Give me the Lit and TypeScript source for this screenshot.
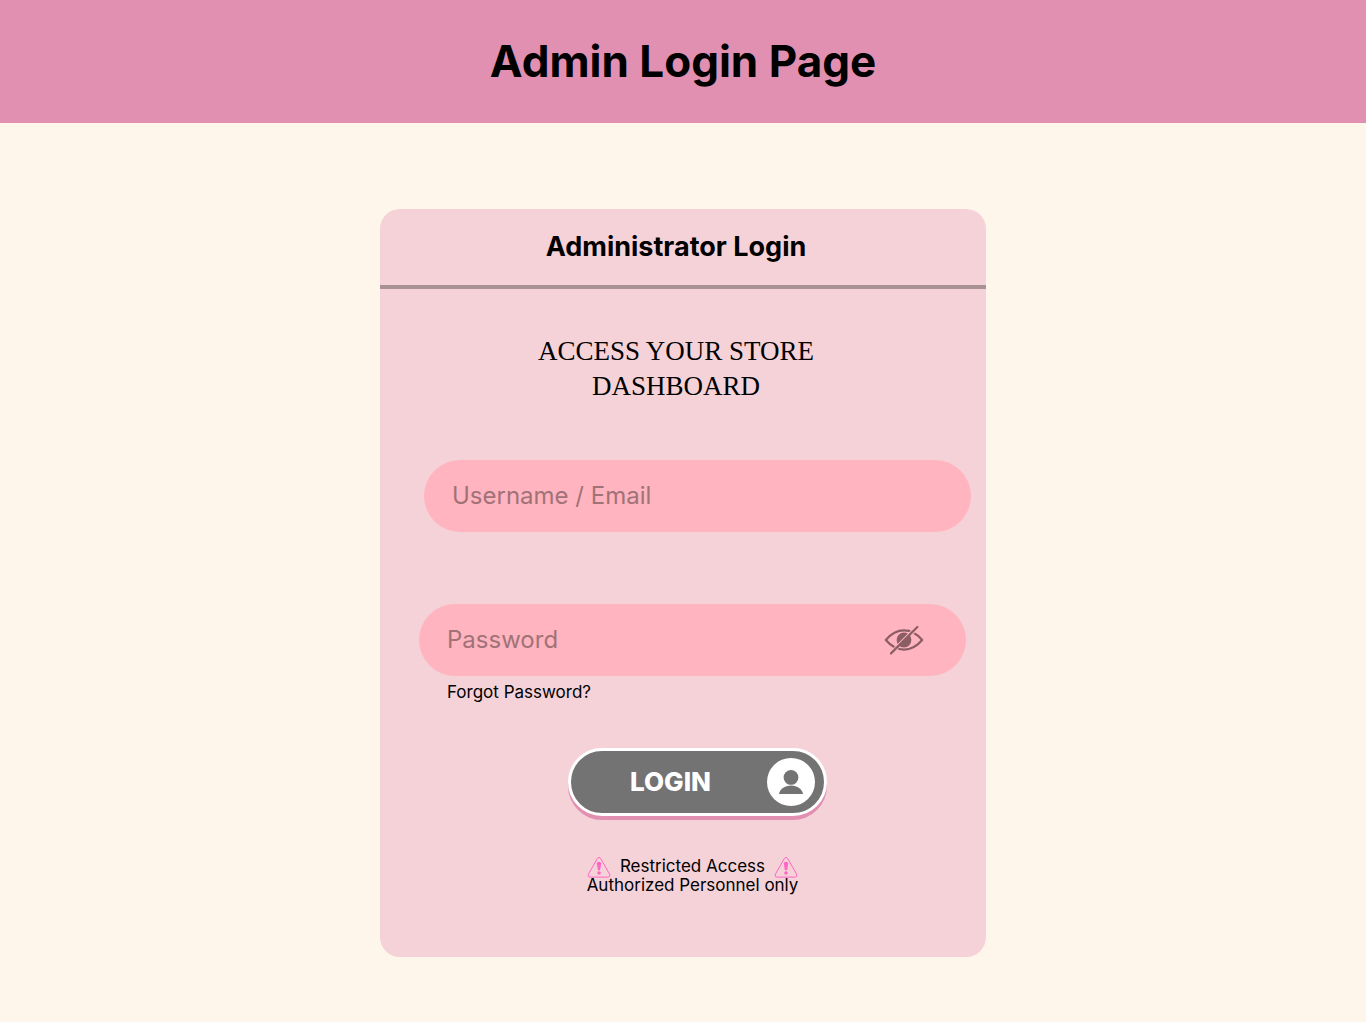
import { LitElement, html, css, svg } from "lit";
import { customElement, state } from "lit/decorators.js";

const warningIcon = html`
  <svg class="warning" viewBox="0 0 24 22" aria-hidden="true">
    <path
      d="M10.4 2.4 Q12 .2 13.6 2.4 L22.6 18.2 Q23.6 20.9 21.2 21.1 H2.8 Q.4 20.9 1.4 18.2 Z"
      fill="none"
      stroke="#ff66c4"
      stroke-width="1"
      stroke-linejoin="round"
    />
    <path d="M9.8 7.6 Q9.8 5.8 12 5.8 Q14.2 5.8 14.2 7.6 L13.1 14.2 H10.9 Z" fill="#ff66c4" />
    <circle cx="12" cy="17" r="1.8" fill="#ff66c4" />
  </svg>
`;

@customElement("app-root")
export class AppRoot extends LitElement {
  @state() private revealed = false;

  static styles = css`
    :host {
      display: flex;
      flex-direction: column;
      min-height: 100vh;
      background: #fff6eb;
      color: #000;
      font-family: Inter, "Liberation Sans", sans-serif;
    }
    * {
      box-sizing: border-box;
    }
    h1,
    h2,
    p {
      margin: 0;
    }
    .banner {
      background: #e190b1;
      padding: 36px 24px 37px;
      text-align: center;
    }
    .banner h1 {
      font-size: 44px;
      line-height: 50px;
      font-weight: 700;
    }
    .stage {
      display: flex;
      justify-content: center;
      padding: 86px 24px 64px;
    }
    .card {
      width: 100%;
      max-width: 606px;
      background: #f5d2d8;
      border-radius: 20px;
    }
    .card-head {
      padding: 22px 14px 22px 0;
      border-bottom: 4px solid #a99295;
      text-align: center;
    }
    .card-head h2 {
      font-size: 27px;
      line-height: 32px;
      font-weight: 700;
    }
    .tagline {
      padding: 45px 14px 56px 0;
      font-family: "Liberation Serif", serif;
      font-size: 27px;
      line-height: 35px;
      text-align: center;
    }
    .form {
      display: flex;
      flex-direction: column;
      padding-bottom: 62px;
    }
    .inset {
      padding: 0 20px 0 39px;
    }
    .inset-wide {
      padding: 0 15px 0 44px;
    }
    .secret {
      padding-top: 72px;
      padding-bottom: 46px;
    }
    .field {
      display: flex;
      align-items: center;
      height: 72px;
      padding: 0 41px 0 28px;
      border-radius: 36px;
      background: #ffb4bf;
    }
    .field input {
      flex: 1;
      min-width: 0;
      padding: 0;
      border: 0;
      outline: 0;
      background: none;
      color: #5c3d42;
      font: 400 24px/30px Inter, "Liberation Sans", sans-serif;
    }
    .field input::placeholder {
      color: #a17278;
      opacity: 1;
    }
    .reveal {
      display: flex;
      padding: 0;
      border: 0;
      background: none;
      cursor: pointer;
    }
    .reveal svg {
      width: 42px;
      height: 32px;
    }
    .forgot {
      display: block;
      width: fit-content;
      margin: 6px 0 0 28px;
      color: #000;
      font-size: 17px;
      line-height: 20px;
      text-decoration: none;
    }
    .actions {
      display: flex;
      justify-content: center;
    }
    .login {
      display: flex;
      align-items: center;
      width: 259px;
      height: 68px;
      padding: 0 9px 0 3px;
      border: 3px solid #fff;
      border-radius: 34px;
      background: #737373;
      box-shadow: 0 4px 0 #e190b1;
      color: #fff;
      font: 800 26px/30px Inter, "Liberation Sans", sans-serif;
      cursor: pointer;
    }
    .login span {
      flex: 1;
    }
    .login svg {
      width: 48px;
      height: 48px;
    }
    .notice {
      padding-top: 41px;
      font-size: 17px;
      line-height: 19px;
      text-align: center;
    }
    .notice-row {
      display: flex;
      align-items: center;
      justify-content: center;
      gap: 9px;
      height: 19px;
    }
    .warning {
      width: 24px;
      height: 22px;
    }
  `;

  private toggleReveal() {
    this.revealed = !this.revealed;
  }

  render() {
    return html`
      <header class="banner"><h1>Admin Login Page</h1></header>
      <main class="stage">
        <section class="card">
          <div class="card-head"><h2>Administrator Login</h2></div>
          <p class="tagline">ACCESS YOUR STORE<br />DASHBOARD</p>
          <form class="form" @submit=${(e: Event) => e.preventDefault()}>
            <div class="inset-wide">
              <div class="field">
                <input type="text" name="username" aria-label="Username / Email" placeholder="Username / Email" />
              </div>
            </div>
            <div class="inset secret">
              <div class="field">
                <input
                  type=${this.revealed ? "text" : "password"}
                  name="password"
                  aria-label="Password"
                  placeholder="Password"
                />
                <button class="reveal" type="button" aria-label="Show password" @click=${this.toggleReveal}>
                  <svg viewBox="0 0 42 32" fill="none" stroke="#8b5e65">
                    <path d="M2.8 16 Q11 6.4 21 6.4 Q31 6.4 39.2 16 Q31 25.6 21 25.6 Q11 25.6 2.8 16 Z" stroke-width="2.2" stroke-linejoin="round" />
                    <circle cx="21" cy="16" r="7.4" fill="#8b5e65" stroke="none" />
                    ${this.revealed
                      ? null
                      : svg`
                        <path d="M7.2 28.2 L33.4 2" stroke="#ffb4bf" stroke-width="1.4" />
                        <path d="M8.7 30.3 L15 24 M29 10 L35.3 3.7" stroke="#ffb4bf" stroke-width="2" />
                        <path d="M8 29.4 L34.4 3" stroke-width="2.2" stroke-linecap="round" />
                      `}
                  </svg>
                </button>
              </div>
              <a class="forgot" href="#forgot">Forgot Password?</a>
            </div>
            <div class="inset-wide actions">
              <button class="login" type="submit">
                <span>LOGIN</span>
                <svg viewBox="0 0 48 48" aria-hidden="true">
                  <circle cx="24" cy="24" r="24" fill="#fff" />
                  <circle cx="24" cy="19.4" r="7.4" fill="#737373" />
                  <path d="M12 36 C12.6 31 17.6 27.4 24 27.4 C30.4 27.4 35.4 31 36 36 Z" fill="#737373" />
                </svg>
              </button>
            </div>
            <div class="inset notice">
              <div class="notice-row">${warningIcon}<span>Restricted Access</span>${warningIcon}</div>
              <p>Authorized Personnel only</p>
            </div>
          </form>
        </section>
      </main>
    `;
  }
}
